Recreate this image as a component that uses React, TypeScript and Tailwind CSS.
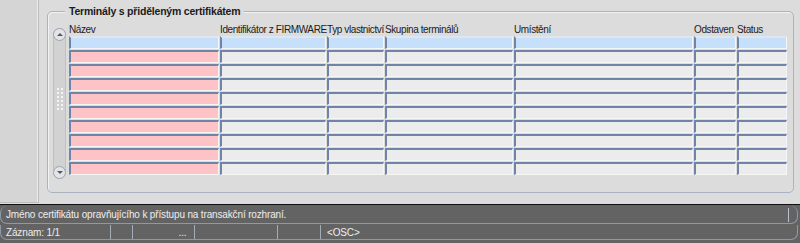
import React from "react";

const columns = [
  { title: "Název", width: "w-[150px]" },
  { title: "Identifikátor z FIRMWARE", width: "w-[106px]" },
  { title: "Typ vlastnictví", width: "w-[57px]" },
  { title: "Skupina terminálů", width: "w-[128px]" },
  { title: "Umístění", width: "w-[179px]" },
  { title: "Odstaven", width: "w-[42px]" },
  { title: "Status", width: "w-[50px]" },
];

const rows = Array.from({ length: 10 }, (_, i) => i);

function cellColor(row: number, col: number) {
  if (row === 0) return "bg-[#c6dffb]";
  if (col === 0) return "bg-[#fdc3c6]";
  return "bg-[#ececec]";
}

function ScrollBar() {
  return (
    <div className="w-[13px] h-[151px] mt-[5px] rounded-full border border-[#b9c1cc] bg-[#d2d2d2] flex flex-col items-center justify-between">
      <div className="w-[13px] h-[13px] -mt-px rounded-full border border-[#9aa6b6] bg-[#e4e4e4] flex items-center justify-center">
        <div className="w-0 h-0 border-l-[3px] border-r-[3px] border-b-[3px] border-l-transparent border-r-transparent border-b-[#4a5a78]" />
      </div>
      <div className="flex flex-col gap-[2px] -mt-[10px] ml-[1px]">
        {Array.from({ length: 6 }, (_, i) => (
          <div key={i} className="flex gap-[2px]">
            <div className="w-[2px] h-[2px] bg-[#f4f4f4]" />
            <div className="w-[2px] h-[2px] bg-[#f4f4f4]" />
          </div>
        ))}
      </div>
      <div className="w-[13px] h-[13px] -mb-px rounded-full border border-[#9aa6b6] bg-[#e4e4e4] flex items-center justify-center">
        <div className="w-0 h-0 border-l-[3px] border-r-[3px] border-t-[3px] border-l-transparent border-r-transparent border-t-[#4a5a78]" />
      </div>
    </div>
  );
}

export default function App() {
  return (
    <div className="w-[800px] h-[243px] flex flex-col bg-[#dcdcdc] text-[10px] leading-[13px] text-[#1b1b1b] font-['Liberation_Sans',Arial,sans-serif] overflow-hidden">
      <div className="h-[204px] flex">
        <div className="w-[39px] h-[203px] bg-[#d5d5d5] border-r border-b border-[#bdbdbd] shadow-[inset_-1px_0_0_#ececec]" />
        <div className="flex-1 pl-[8px] pr-[6px] pt-[11px]">
          <div className="relative h-[182px] rounded-[5px] border border-[#a9b4c3] shadow-[inset_1px_1px_0_#f2f2f2]">
            <span className="absolute -top-[7px] left-[17px] px-[4px] bg-[#dcdcdc] font-bold text-[10.5px] leading-[13px] tracking-[-0.2px]">
              Terminály s přiděleným certifikátem
            </span>
            <div className="flex pl-[5px] pt-[11px] gap-[3px]">
              <ScrollBar />
              <div className="flex flex-col">
                <div className="flex gap-px h-[13px] tracking-[-0.4px]">
                  {columns.map((c) => (
                    <div key={c.title} className={`${c.width} shrink-0 whitespace-nowrap`}>
                      {c.title}
                    </div>
                  ))}
                </div>
                <div className="flex flex-col gap-px">
                  {rows.map((r) => (
                    <div key={r} className="flex gap-px">
                      {columns.map((c, ci) => (
                        <div
                          key={c.title}
                          className={`${c.width} shrink-0 h-[13px] border-l-2 border-t-2 border-r border-b ${
                            r === 0 ? "border-t-[#dfe6ee]" : "border-t-[#7084a8]"
                          } border-l-[#7084a8] border-r-[#f6f6f6] border-b-[#f6f6f6] ${cellColor(r, ci)}`}
                        />
                      ))}
                    </div>
                  ))}
                </div>
              </div>
            </div>
          </div>
        </div>
      </div>
      <div className="flex-1 bg-[#636363] border-t border-[#111111] pt-px pr-[2px] text-[#eeeeee] text-[10px] tracking-[-0.15px]">
        <div className="h-[18px] flex items-center rounded-l-[7px] rounded-r-[7px] border-b border-l border-r border-[#8e99a8] pl-[5px] pr-[8px]">
          <span className="flex-1">Jméno certifikátu opravňujícího k přístupu na transakční rozhraní.</span>
          <div className="w-px h-[14px] bg-[#b8c2ce]" />
        </div>
        <div className="h-[15px] mt-px flex items-center rounded-bl-[7px] rounded-br-[7px] border-b border-l border-r border-[#8e99a8]">
          <div className="w-[110px] pl-[5px] border-r border-[#a3acb8] h-full flex items-center">Záznam: 1/1</div>
          <div className="w-[22px] border-r border-[#a3acb8] h-full" />
          <div className="w-[62px] border-r border-[#a3acb8] h-full flex items-center justify-center">
            <span className="ml-[38px]">...</span>
          </div>
          <div className="w-[83px] border-r border-[#a3acb8] h-full" />
          <div className="w-[43px] border-r border-[#a3acb8] h-full" />
          <div className="pl-[6px] flex items-center">&lt;OSC&gt;</div>
        </div>
      </div>
    </div>
  );
}
